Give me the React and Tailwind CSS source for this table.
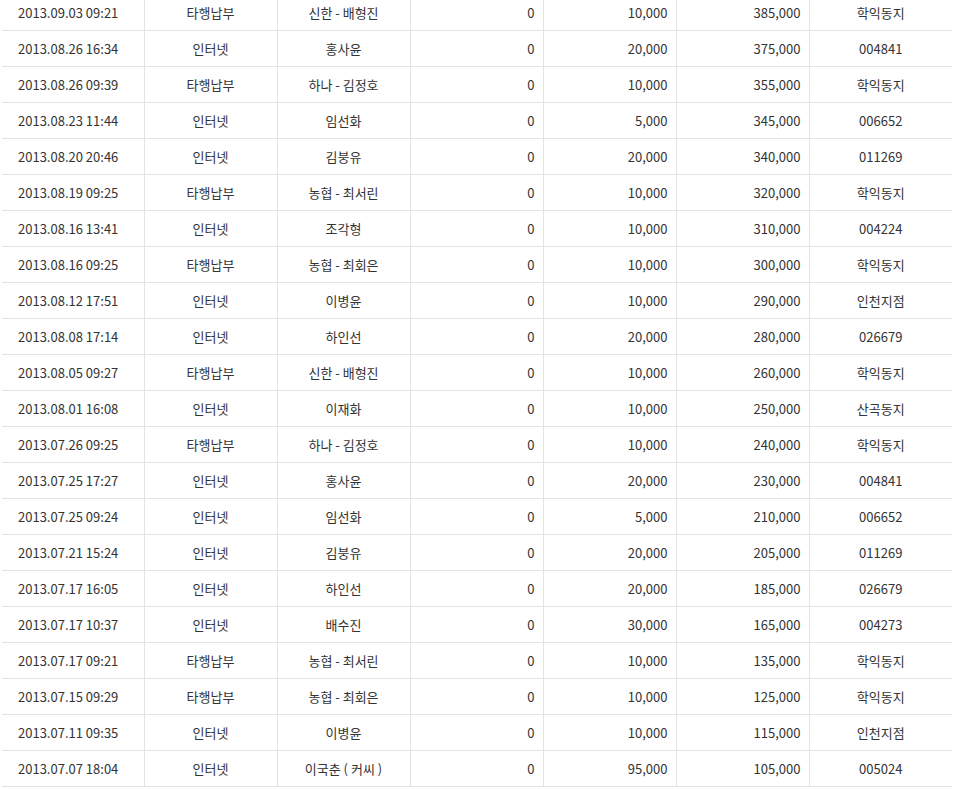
const rows = [
  ["2013.09.03 09:21", "타행납부", "신한 - 배형진", "0", "10,000", "385,000", "학익동지"],
  ["2013.08.26 16:34", "인터넷", "홍사윤", "0", "20,000", "375,000", "004841"],
  ["2013.08.26 09:39", "타행납부", "하나 - 김정호", "0", "10,000", "355,000", "학익동지"],
  ["2013.08.23 11:44", "인터넷", "임선화", "0", "5,000", "345,000", "006652"],
  ["2013.08.20 20:46", "인터넷", "김붕유", "0", "20,000", "340,000", "011269"],
  ["2013.08.19 09:25", "타행납부", "농협 - 최서린", "0", "10,000", "320,000", "학익동지"],
  ["2013.08.16 13:41", "인터넷", "조각형", "0", "10,000", "310,000", "004224"],
  ["2013.08.16 09:25", "타행납부", "농협 - 최회은", "0", "10,000", "300,000", "학익동지"],
  ["2013.08.12 17:51", "인터넷", "이병윤", "0", "10,000", "290,000", "인천지점"],
  ["2013.08.08 17:14", "인터넷", "하인선", "0", "20,000", "280,000", "026679"],
  ["2013.08.05 09:27", "타행납부", "신한 - 배형진", "0", "10,000", "260,000", "학익동지"],
  ["2013.08.01 16:08", "인터넷", "이재화", "0", "10,000", "250,000", "산곡동지"],
  ["2013.07.26 09:25", "타행납부", "하나 - 김정호", "0", "10,000", "240,000", "학익동지"],
  ["2013.07.25 17:27", "인터넷", "홍사윤", "0", "20,000", "230,000", "004841"],
  ["2013.07.25 09:24", "인터넷", "임선화", "0", "5,000", "210,000", "006652"],
  ["2013.07.21 15:24", "인터넷", "김붕유", "0", "20,000", "205,000", "011269"],
  ["2013.07.17 16:05", "인터넷", "하인선", "0", "20,000", "185,000", "026679"],
  ["2013.07.17 10:37", "인터넷", "배수진", "0", "30,000", "165,000", "004273"],
  ["2013.07.17 09:21", "타행납부", "농협 - 최서린", "0", "10,000", "135,000", "학익동지"],
  ["2013.07.15 09:29", "타행납부", "농협 - 최회은", "0", "10,000", "125,000", "학익동지"],
  ["2013.07.11 09:35", "인터넷", "이병윤", "0", "10,000", "115,000", "인천지점"],
  ["2013.07.07 18:04", "인터넷", "이국춘 ( 커씨 )", "0", "95,000", "105,000", "005024"],
];

// each cell: right + bottom hairline, 36px tall, text nudged 1px down
const cellBase = "border-r border-b border-[#e3e3e3] h-9 pt-[2px] whitespace-nowrap";

const PaymentLog = () => {
  return (
    <div className="h-[789px] overflow-hidden bg-white">
      <div className="ml-[2px] -mt-[6px] w-[950px]">
        <table
          className="w-[950px] table-fixed border-collapse text-[13px] text-[#333]"
          style={{ fontFamily: '"Noto Sans CJK KR", "Noto Sans", sans-serif' }}
        >
          <colgroup>
            <col className="w-[142px]" />
            <col className="w-[133px]" />
            <col className="w-[133px]" />
            <col className="w-[133px]" />
            <col className="w-[133px]" />
            <col className="w-[133px]" />
            <col className="w-[143px]" />
          </colgroup>
          <tbody>
            {rows.map((r, i) => (
              <tr key={i}>
                <td className={`${cellBase} pl-4 text-left`}>{r[0]}</td>
                <td className={`${cellBase} text-center`}>{r[1]}</td>
                <td className={`${cellBase} text-center`}>{r[2]}</td>
                <td className={`${cellBase} pr-2 text-right`}>{r[3]}</td>
                <td className={`${cellBase} pr-2 text-right`}>{r[4]}</td>
                <td className={`${cellBase} pr-2 text-right`}>{r[5]}</td>
                <td className="h-9 border-b border-[#e3e3e3] pt-[2px] text-center whitespace-nowrap">{r[6]}</td>
              </tr>
            ))}
          </tbody>
        </table>
      </div>
    </div>
  );
};

export default PaymentLog;
